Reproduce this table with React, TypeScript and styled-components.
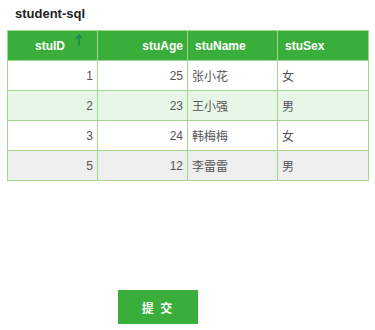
import React from "react";
import styled, { createGlobalStyle } from "styled-components";

const Global = createGlobalStyle`
  html, body { margin: 0; padding: 0; background: #fff; }
  body { font-family: "Liberation Sans", Arial, "Noto Sans CJK SC", sans-serif; }
`;

const Page = styled.div`
  width: 375px;
  height: 330px;
  display: flex;
  flex-direction: column;
`;

const Title = styled.h3`
  margin: 0;
  padding: 5px 0 0 15px;
  height: 25px;
  line-height: 17px;
  font-size: 13px;
  font-weight: bold;
  color: #222;
`;

const Grid = styled.table`
  margin: 0 7px;
  width: 361px;
  border-collapse: collapse;
  table-layout: fixed;
  font-size: 12px;
`;

const Head = styled.th<{ $align: "left" | "right" }>`
  height: 29px;
  padding: ${(p) => (p.$align === "left" ? "0 4px 0 7px" : "0 4px")};
  background: #3aae3a;
  color: #fff;
  font-weight: bold;
  text-align: ${(p) => p.$align};
  border: 1px solid #a3d68e;
  position: relative;
`;

const Row = styled.tr<{ $tone: "plain" | "green" | "gray" }>`
  background: ${(p) =>
    p.$tone === "green" ? "#e8f6e8" : p.$tone === "gray" ? "#efefef" : "#fff"};
`;

const Cell = styled.td<{ $align: "left" | "right" }>`
  height: 29px;
  padding: 0 4px;
  color: #555;
  text-align: ${(p) => p.$align};
  border: 1px solid #a3d68e;
  font-family: "Liberation Sans", Arial, "Noto Sans CJK SC", sans-serif;
`;

const SortMark = styled.svg`
  position: absolute;
  top: 3px;
  right: 14px;
`;

const HeadLabel = styled.span`
  display: inline-block;
  margin-right: 28px;
`;

const Footer = styled.div`
  display: flex;
  padding: 109px 0 0 118px;
`;

const Submit = styled.button`
  width: 80px;
  height: 34px;
  border: none;
  background: #3aae3a;
  color: #fff;
  font-size: 12px;
  font-weight: bold;
  font-family: "Noto Sans CJK SC", sans-serif;
  letter-spacing: 2px;
  cursor: pointer;
`;

type Student = { id: number; age: number; name: string; sex: string };

const students: Student[] = [
  { id: 1, age: 25, name: "张小花", sex: "女" },
  { id: 2, age: 23, name: "王小强", sex: "男" },
  { id: 3, age: 24, name: "韩梅梅", sex: "女" },
  { id: 5, age: 12, name: "李雷雷", sex: "男" },
];

const tones: Array<"plain" | "green" | "gray"> = ["plain", "green", "plain", "gray"];

export default function App() {
  return (
    <Page>
      <Global />
      <Title>student-sql</Title>
      <Grid>
        <colgroup>
          <col style={{ width: 90 }} />
          <col style={{ width: 90 }} />
          <col style={{ width: 90 }} />
          <col style={{ width: 91 }} />
        </colgroup>
        <thead>
          <tr>
            <Head $align="right">
              <HeadLabel>stuID</HeadLabel>
              <SortMark width="8" height="12" viewBox="0 0 8 12">
                <path
                  d="M4 11.5V1.5M1 4.5L4 1.2L7 4.5"
                  fill="none"
                  stroke="#178a4e"
                  strokeWidth="1.6"
                />
              </SortMark>
            </Head>
            <Head $align="right">stuAge</Head>
            <Head $align="left">stuName</Head>
            <Head $align="left">stuSex</Head>
          </tr>
        </thead>
        <tbody>
          {students.map((s, i) => (
            <Row key={s.id} $tone={tones[i]}>
              <Cell $align="right">{s.id}</Cell>
              <Cell $align="right">{s.age}</Cell>
              <Cell $align="left">{s.name}</Cell>
              <Cell $align="left">{s.sex}</Cell>
            </Row>
          ))}
        </tbody>
      </Grid>
      <Footer>
        <Submit>提 交</Submit>
      </Footer>
    </Page>
  );
}
